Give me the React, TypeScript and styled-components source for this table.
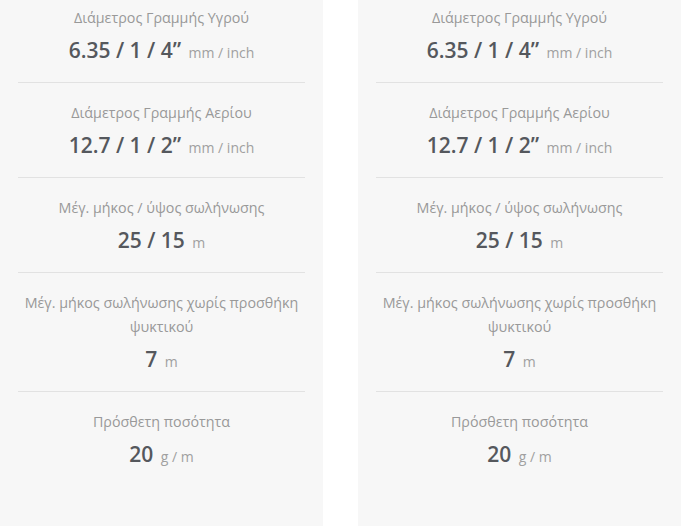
import styled, { createGlobalStyle } from "styled-components";

const GlobalStyle = createGlobalStyle`
  html, body {
    margin: 0;
    padding: 0;
    background: #ffffff;
  }
  body {
    font-family: "Open Sans", "Noto Sans", "DejaVu Sans", sans-serif;
  }
`;

const Page = styled.div`
  display: flex;
  gap: 35px;
  width: 681px;
  height: 526px;
  overflow: hidden;
`;

const Panel = styled.div`
  flex: 0 0 323px;
  height: 526px;
  background: #f7f7f7;
  padding: 0 18px;
  box-sizing: border-box;
`;

const Spec = styled.div`
  text-align: center;
  padding: 18px 0 17px;
  border-bottom: 1px solid #e2e2e2;

  &:first-child {
    padding-top: 6px;
  }
  &:last-child {
    border-bottom: none;
  }
`;

const Label = styled.div`
  font-size: 14.3px;
  line-height: 24px;
  color: #999999;
`;

const Value = styled.div`
  margin-top: 5px;
  font-size: 21px;
  line-height: 30px;
  font-weight: 600;
  color: #55585d;
`;

const Unit = styled.span`
  font-size: 14px;
  line-height: 1;
  font-weight: 400;
  color: #a0a0a0;
  margin-left: 2px;
`;

type Item = { label: string; value: string; unit: string };

const specs: Item[] = [
  { label: "Διάμετρος Γραμμής Υγρού", value: "6.35 / 1 / 4”", unit: "mm / inch" },
  { label: "Διάμετρος Γραμμής Αερίου", value: "12.7 / 1 / 2”", unit: "mm / inch" },
  { label: "Μέγ. μήκος / ύψος σωλήνωσης", value: "25 / 15", unit: "m" },
  {
    label: "Μέγ. μήκος σωλήνωσης χωρίς προσθήκη ψυκτικού",
    value: "7",
    unit: "m",
  },
  { label: "Πρόσθετη ποσότητα", value: "20", unit: "g / m" },
];

const SpecPanel = () => (
  <Panel>
    {specs.map((s) => (
      <Spec key={s.label}>
        <Label>{s.label}</Label>
        <Value>
          {s.value} <Unit>{s.unit}</Unit>
        </Value>
      </Spec>
    ))}
  </Panel>
);

export default function App() {
  return (
    <>
      <GlobalStyle />
      <Page>
        <SpecPanel />
        <SpecPanel />
      </Page>
    </>
  );
}
